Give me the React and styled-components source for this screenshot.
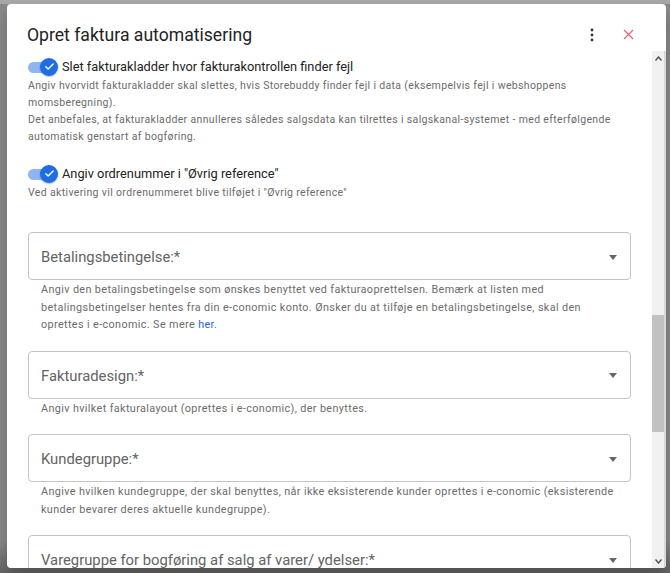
import React from "react";
import styled, { createGlobalStyle } from "styled-components";

const GlobalStyle = createGlobalStyle`
  html, body {
    margin: 0;
    padding: 0;
    height: 100%;
  }
  body {
    font-family: Roboto, "Liberation Sans", Arial, sans-serif;
    background: #8d8d8d;
    overflow: hidden;
  }
`;

const Backdrop = styled.div`
  width: 670px;
  height: 573px;
  background: linear-gradient(#a9a9a9 0px, #a9a9a9 4px, #8b8b8b 4px, #8b8b8b 540px, #666 573px);
  padding: 4px 4px 5px 7px;
  box-sizing: border-box;
`;

const Dialog = styled.div`
  width: 659px;
  height: 564px;
  background: #fff;
  border-radius: 4px;
  display: flex;
  flex-direction: column;
  overflow: hidden;
  box-shadow: 0 8px 16px rgba(0, 0, 0, 0.25);
`;

const Header = styled.div`
  display: flex;
  align-items: center;
  height: 47px;
  padding: 14px 26px 0 20px;
  box-sizing: border-box;
`;

const Title = styled.h2`
  flex: 1;
  margin: 0;
  font-size: 17.6px;
  font-weight: 400;
  color: #222;
`;

const IconButton = styled.button`
  border: none;
  background: none;
  padding: 0;
  width: 24px;
  height: 24px;
  display: flex;
  align-items: center;
  justify-content: center;
  margin-left: ${(p) => p.$gap || 0}px;
  cursor: pointer;
`;

const Body = styled.div`
  flex: 1;
  display: flex;
  min-height: 0;
`;

const Content = styled.div`
  flex: 1;
  overflow: hidden;
  padding: 5px 21px 0 21px;
`;

const SwitchRow = styled.label`
  display: flex;
  align-items: center;
  height: 21px;
  gap: 4px;
  margin-top: ${(p) => p.$top || 0}px;
`;

const Track = styled.span`
  position: relative;
  width: 30px;
  height: 16px;
  display: inline-block;
  &::before {
    content: "";
    position: absolute;
    left: 0;
    top: 3px;
    width: 26px;
    height: 11px;
    border-radius: 6px;
    background: #8fb6f2;
  }
`;

const Thumb = styled.span`
  position: absolute;
  right: 0;
  top: -1px;
  width: 18px;
  height: 18px;
  border-radius: 50%;
  background: #1c6ee2;
  box-shadow: 0 1px 2px rgba(0, 0, 0, 0.3);
  display: flex;
  align-items: center;
  justify-content: center;
`;

const SwitchLabel = styled.span`
  font-size: 12.8px;
  color: #222;
`;

const Desc = styled.p`
  margin: 0;
  font-size: 10.5px;
  line-height: 17px;
  color: #6b6b6b;
  letter-spacing: 0.35px;
`;

const Fields = styled.div`
  display: flex;
  flex-direction: column;
  gap: 17px;
  margin-top: 31px;
`;

const Field = styled.div`
  display: flex;
  flex-direction: column;
`;

const SelectBox = styled.div`
  height: 48px;
  box-sizing: border-box;
  border: 1px solid #c4c4c4;
  border-radius: 4px;
  display: flex;
  align-items: center;
  padding: 2px 13px 0 12px;
  cursor: pointer;
`;

const SelectLabel = styled.span`
  flex: 1;
  font-size: 14.8px;
  color: #636363;
`;

const Caret = styled.span`
  width: 0;
  height: 0;
  border-left: 4.5px solid transparent;
  border-right: 4.5px solid transparent;
  border-top: 5px solid #666;
`;

const Help = styled.p`
  margin: 1px 0 0;
  padding: 0 0 0 13px;
  font-size: 10.8px;
  line-height: 17.5px;
  color: #6b6b6b;
  letter-spacing: 0.38px;
`;

const Link = styled.a`
  color: #1a66d6;
  text-decoration: none;
`;

const Scrollbar = styled.div`
  width: 12px;
  background: #f1f1f1;
  display: flex;
  flex-direction: column;
  align-items: center;
  border-right: 2px solid #d8d8d8;
`;

const Arrow = styled.div`
  height: 14px;
  display: flex;
  align-items: center;
  justify-content: center;
`;

const ScrollTrack = styled.div`
  flex: 1;
  width: 100%;
  padding-top: 250px;
  box-sizing: border-box;
`;

const ScrollThumb = styled.div`
  height: 117px;
  background: #c1c1c1;
`;

function Switch() {
  return (
    <Track>
      <Thumb>
        <svg width="11" height="11" viewBox="0 0 24 24">
          <path d="M4 12.5l5 5L20 6.5" fill="none" stroke="#fff" strokeWidth="3" strokeLinecap="round" strokeLinejoin="round" />
        </svg>
      </Thumb>
    </Track>
  );
}

function Select({ label, children }) {
  return (
    <Field>
      <SelectBox>
        <SelectLabel>{label}</SelectLabel>
        <Caret />
      </SelectBox>
      <Help>{children}</Help>
    </Field>
  );
}

export default function App() {
  return (
    <>
      <GlobalStyle />
      <Backdrop>
        <Dialog>
          <Header>
            <Title>Opret faktura automatisering</Title>
            <IconButton aria-label="menu">
              <svg width="4" height="14" viewBox="0 0 4 14">
                <circle cx="2" cy="2" r="1.4" fill="#333" />
                <circle cx="2" cy="7" r="1.4" fill="#333" />
                <circle cx="2" cy="12" r="1.4" fill="#333" />
              </svg>
            </IconButton>
            <IconButton aria-label="close" $gap={12}>
              <svg width="11" height="11" viewBox="0 0 11 11">
                <path d="M1 1l9 9M10 1l-9 9" stroke="#e8676a" strokeWidth="1.3" />
              </svg>
            </IconButton>
          </Header>
          <Body>
            <Content>
              <SwitchRow>
                <Switch />
                <SwitchLabel>Slet fakturakladder hvor fakturakontrollen finder fejl</SwitchLabel>
              </SwitchRow>
              <Desc>
                Angiv hvorvidt fakturakladder skal slettes, hvis Storebuddy finder fejl i data (eksempelvis fejl i webshoppens
                momsberegning).
                <br />
                Det anbefales, at fakturakladder annulleres således salgsdata kan tilrettes i salgskanal-systemet - med efterfølgende
                automatisk genstart af bogføring.
              </Desc>
              <SwitchRow $top={18}>
                <Switch />
                <SwitchLabel>Angiv ordrenummer i "Øvrig reference"</SwitchLabel>
              </SwitchRow>
              <Desc>Ved aktivering vil ordrenummeret blive tilføjet i "Øvrig reference"</Desc>
              <Fields>
                <Select label="Betalingsbetingelse:*">
                  Angiv den betalingsbetingelse som ønskes benyttet ved fakturaoprettelsen. Bemærk at listen med
                  betalingsbetingelser hentes fra din e-conomic konto. Ønsker du at tilføje en betalingsbetingelse, skal den
                  <br />
                  oprettes i e-conomic. Se mere <Link href="#">her</Link>.
                </Select>
                <Select label="Fakturadesign:*">
                  Angiv hvilket fakturalayout (oprettes i e-conomic), der benyttes.
                </Select>
                <Select label="Kundegruppe:*">
                  Angive hvilken kundegruppe, der skal benyttes, når ikke eksisterende kunder oprettes i e-conomic (eksisterende
                  kunder bevarer deres aktuelle kundegruppe).
                </Select>
                <Select label="Varegruppe for bogføring af salg af varer/ ydelser:*">
                  Angiv hvilken varegruppe der benyttes.
                </Select>
              </Fields>
            </Content>
            <Scrollbar>
              <Arrow>
                <svg width="7" height="5" viewBox="0 0 7 5">
                  <path d="M0.5 4.5L3.5 1l3 3.5" fill="none" stroke="#505050" strokeWidth="1.4" />
                </svg>
              </Arrow>
              <ScrollTrack>
                <ScrollThumb />
              </ScrollTrack>
              <Arrow>
                <svg width="7" height="5" viewBox="0 0 7 5">
                  <path d="M0.5 0.5L3.5 4l3-3.5" fill="none" stroke="#505050" strokeWidth="1.4" />
                </svg>
              </Arrow>
            </Scrollbar>
          </Body>
        </Dialog>
      </Backdrop>
    </>
  );
}
